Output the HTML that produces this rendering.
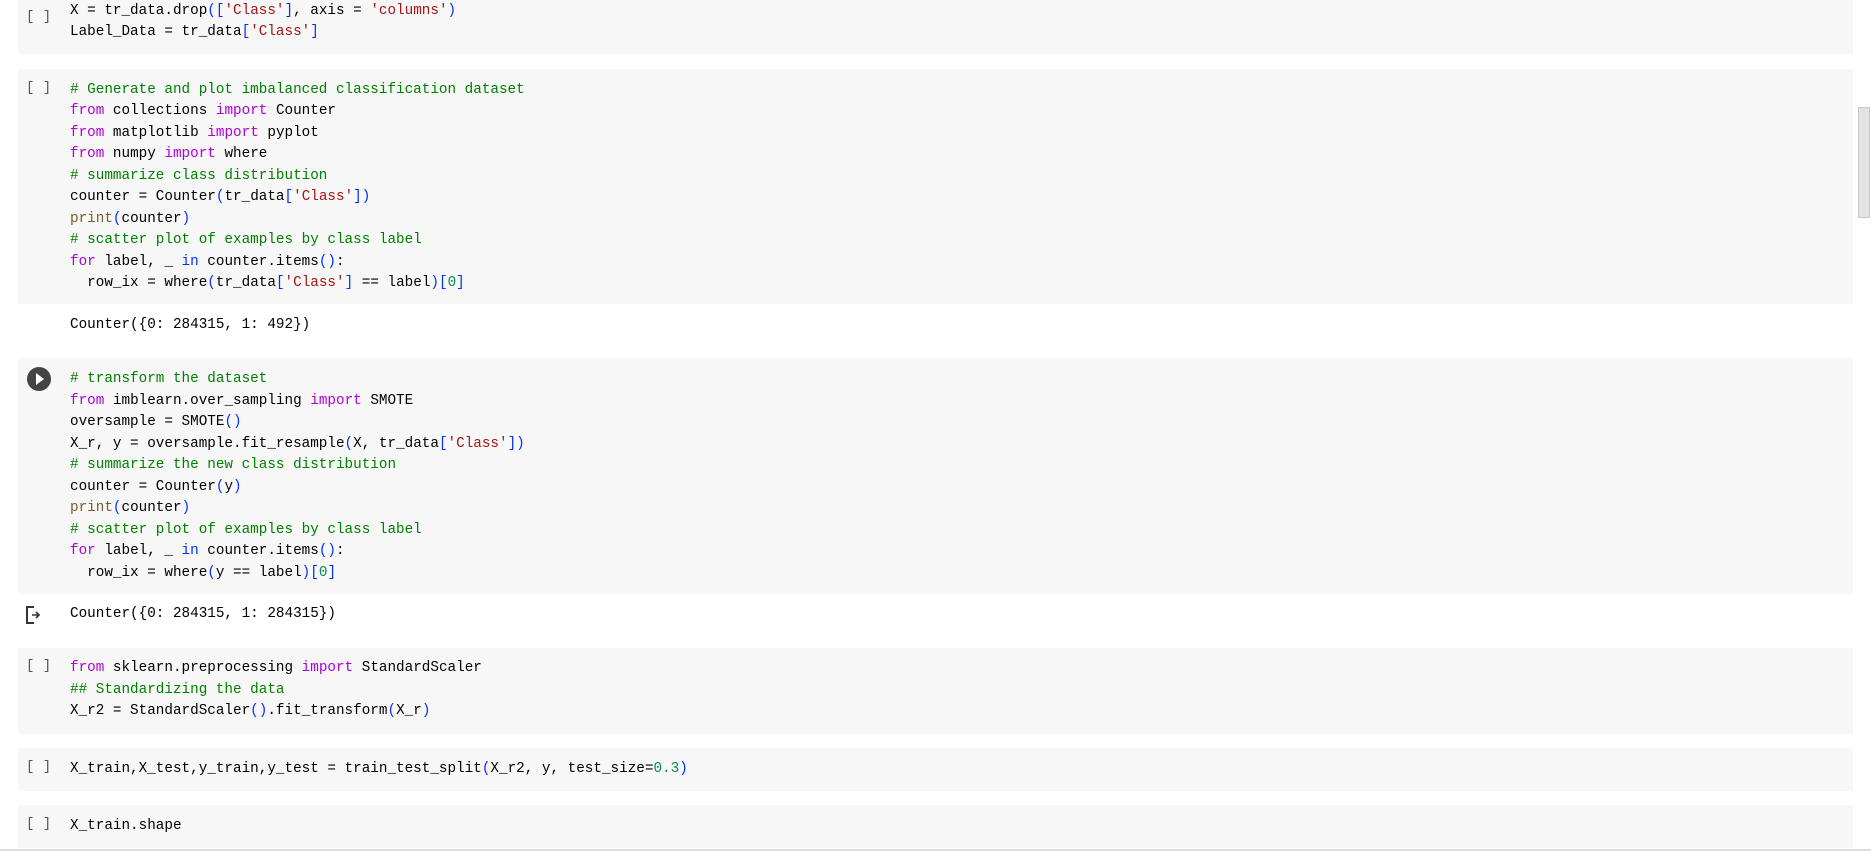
<!DOCTYPE html>
<html><head><style>
body{margin:0;width:1871px;height:852px;background:#fff;position:relative;overflow:hidden;font-family:"Liberation Mono",monospace;font-size:14.3px;color:#000}
.c{position:absolute;left:18px;width:1835px;background:#f7f7f7}
.l{position:absolute;left:70px;white-space:pre;line-height:20px}
.b{position:absolute;left:26px;white-space:pre;color:#555;font-size:14px}
.k{color:#af00db}.s{color:#a31515}.p{color:#0431fa}.g{color:#008000}.f{color:#795e26}.n{color:#098658}
</style></head><body>
<div class="c" style="top:0;height:54px"></div>
<div class="c" style="top:69px;height:235px"></div>
<div class="c" style="top:358px;height:236px"></div>
<div class="c" style="top:648px;height:86px"></div>
<div class="c" style="top:748px;height:43px"></div>
<div class="c" style="top:805px;height:43px"></div>
<div style="position:absolute;left:0;top:849px;width:1871px;height:2px;background:#ddd"></div>
<div style="position:absolute;left:1858px;top:107px;width:12px;height:111px;background:#e3e3e3;border:1px solid #c8c8c8;box-sizing:border-box"></div>

<div class="b" style="top:9px">[ ]</div>
<div class="l" style="top:1px">X = tr_data.drop<span class="p">([</span><span class="s">'Class'</span><span class="p">]</span>, axis = <span class="s">'columns'</span><span class="p">)</span></div>
<div class="l" style="top:22px">Label_Data = tr_data<span class="p">[</span><span class="s">'Class'</span><span class="p">]</span></div>

<div class="b" style="top:80px">[ ]</div>
<div class="l" style="top:80px"><span class="g"># Generate and plot imbalanced classification dataset</span></div>
<div class="l" style="top:101px"><span class="k">from</span> collections <span class="k">import</span> Counter</div>
<div class="l" style="top:123px"><span class="k">from</span> matplotlib <span class="k">import</span> pyplot</div>
<div class="l" style="top:144px"><span class="k">from</span> numpy <span class="k">import</span> where</div>
<div class="l" style="top:166px"><span class="g"># summarize class distribution</span></div>
<div class="l" style="top:187px">counter = Counter<span class="p">(</span>tr_data<span class="p">[</span><span class="s">'Class'</span><span class="p">])</span></div>
<div class="l" style="top:209px"><span class="f">print</span><span class="p">(</span>counter<span class="p">)</span></div>
<div class="l" style="top:230px"><span class="g"># scatter plot of examples by class label</span></div>
<div class="l" style="top:252px"><span class="k">for</span> label, _ <span class="p">in</span> counter.items<span class="p">()</span>:</div>
<div class="l" style="top:273px">  row_ix = where<span class="p">(</span>tr_data<span class="p">[</span><span class="s">'Class'</span><span class="p">]</span> == label<span class="p">)[</span><span class="n">0</span><span class="p">]</span></div>
<div class="l" style="top:315px">Counter({0: 284315, 1: 492})</div>

<div style="position:absolute;left:27px;top:367px;width:24px;height:24px;border-radius:50%;background:#444"></div>
<div style="position:absolute;left:36px;top:373px;width:0;height:0;border-left:8px solid #fff;border-top:6px solid transparent;border-bottom:6px solid transparent"></div>
<div class="l" style="top:369px"><span class="g"># transform the dataset</span></div>
<div class="l" style="top:391px"><span class="k">from</span> imblearn.over_sampling <span class="k">import</span> SMOTE</div>
<div class="l" style="top:412px">oversample = SMOTE<span class="p">()</span></div>
<div class="l" style="top:434px">X_r, y = oversample.fit_resample<span class="p">(</span>X, tr_data<span class="p">[</span><span class="s">'Class'</span><span class="p">])</span></div>
<div class="l" style="top:455px"><span class="g"># summarize the new class distribution</span></div>
<div class="l" style="top:477px">counter = Counter<span class="p">(</span>y<span class="p">)</span></div>
<div class="l" style="top:498px"><span class="f">print</span><span class="p">(</span>counter<span class="p">)</span></div>
<div class="l" style="top:520px"><span class="g"># scatter plot of examples by class label</span></div>
<div class="l" style="top:541px"><span class="k">for</span> label, _ <span class="p">in</span> counter.items<span class="p">()</span>:</div>
<div class="l" style="top:563px">  row_ix = where<span class="p">(</span>y == label<span class="p">)[</span><span class="n">0</span><span class="p">]</span></div>
<svg style="position:absolute;left:25px;top:605px" width="18" height="20" viewBox="0 0 18 20"><path d="M9 2H2v16h7" fill="none" stroke="#333" stroke-width="2"/><path d="M7 10h7M11 7l3 3-3 3" fill="none" stroke="#333" stroke-width="1.6"/></svg>
<div class="l" style="top:604px">Counter({0: 284315, 1: 284315})</div>

<div class="b" style="top:658px">[ ]</div>
<div class="l" style="top:658px"><span class="k">from</span> sklearn.preprocessing <span class="k">import</span> StandardScaler</div>
<div class="l" style="top:680px"><span class="g">## Standardizing the data</span></div>
<div class="l" style="top:701px">X_r2 = StandardScaler<span class="p">()</span>.fit_transform<span class="p">(</span>X_r<span class="p">)</span></div>

<div class="b" style="top:759px">[ ]</div>
<div class="l" style="top:759px">X_train,X_test,y_train,y_test = train_test_split<span class="p">(</span>X_r2, y, test_size=<span class="n">0.3</span><span class="p">)</span></div>

<div class="b" style="top:816px">[ ]</div>
<div class="l" style="top:816px">X_train.shape</div>
</body></html>
